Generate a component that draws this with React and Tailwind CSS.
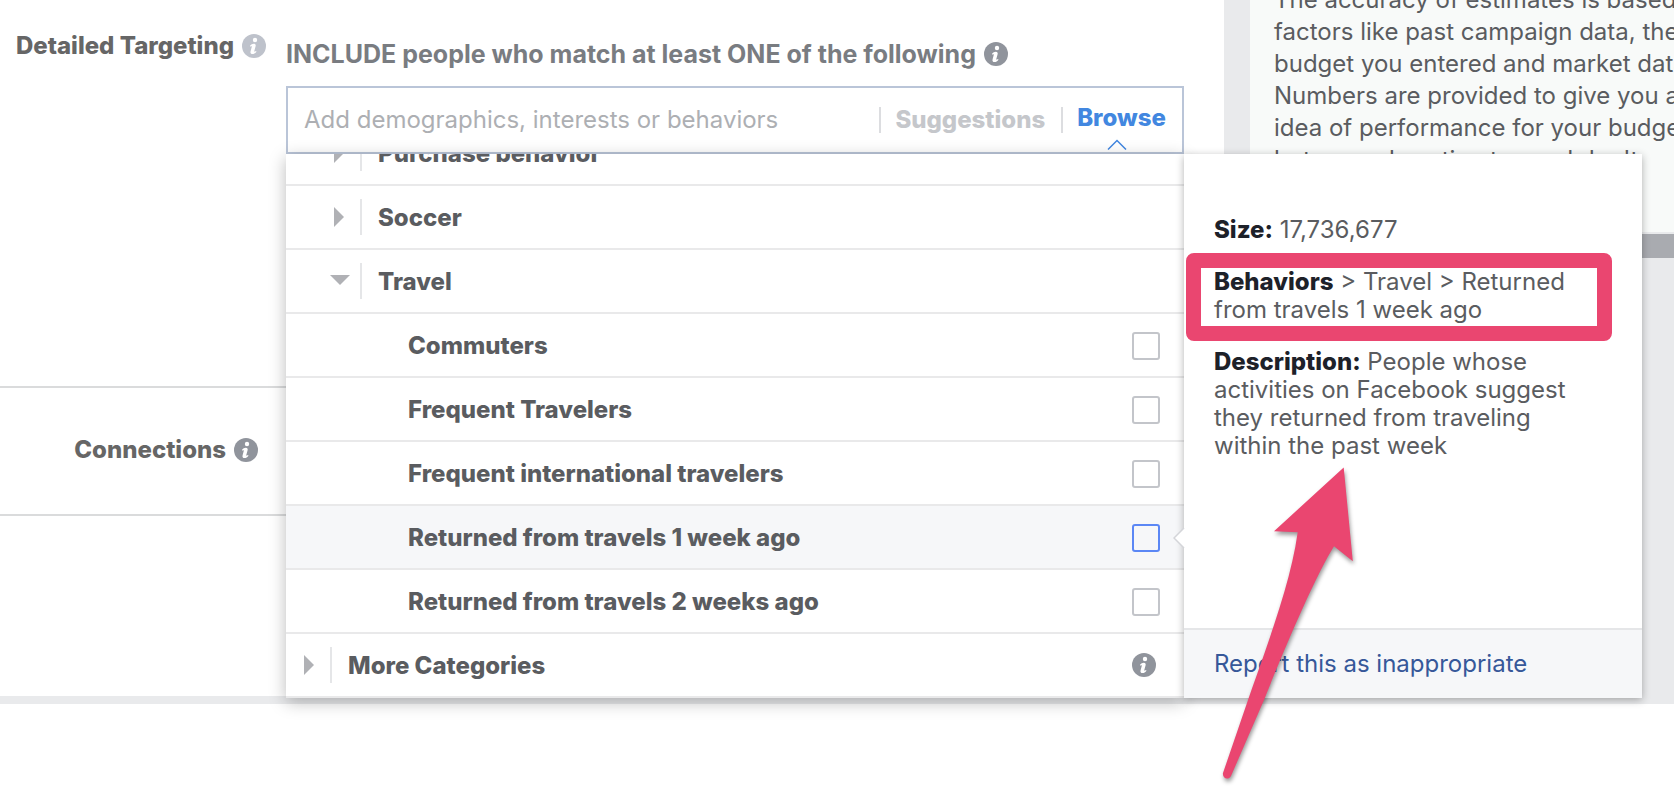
import React from "react";

function InfoIcon({ className }) {
  return (
    <svg viewBox="0 0 24 24" className={"size-6 shrink-0 " + className} aria-hidden="true">
      <circle cx="12" cy="12" r="12" fill="currentColor" />
      <circle cx="13" cy="6" r="2.2" fill="#fff" />
      <path
        d="M8 11.800c1-1.300 2.400-2 3.800-2 1.500 0 2.200 1 1.800 2.500l-1.300 4.700c-.2.800.2.900.7.600l1-.7.500.8c-1.100 1.500-2.500 2.400-4 2.400-1.700 0-2.400-1.100-1.900-2.900l1.200-4.400c.2-.7-.2-.8-.6-.5l-.8.400z"
        fill="#fff"
      />
    </svg>
  );
}

function Triangle({ open }) {
  return (
    <svg viewBox="0 0 20 20" className="size-5 shrink-0 text-[#b0b1b5]" aria-hidden="true">
      <path d={open ? "M0 4h20l-10 10z" : "M4 0v20l10-10z"} fill="currentColor" />
    </svg>
  );
}

function CategoryRow({ label, open, nested, info, className = "" }) {
  return (
    <li className={"flex h-16 items-center border-b-2 border-[#e9e9ea] pr-7 " + (nested ? "pl-11 " : "pl-[14px] ") + className}>
      <button type="button" aria-expanded={!!open} className="flex flex-1 items-center text-left font-extrabold">
        <Triangle open={open} />
        <span className="ml-[10px] flex h-9 items-center border-l-2 border-[#e5e6e8] pt-0.5 pl-4">{label}</span>
      </button>
      {info && <InfoIcon className="text-[#90949c]" />}
    </li>
  );
}

function OptionRow({ id, label, active }) {
  return (
    <li className={"flex h-16 items-center border-b-2 border-[#e9e9ea] pt-0.5 pr-6 pl-[122px] " + (active ? "bg-[#f6f7f9]" : "")}>
      <label htmlFor={id} className="flex-1 font-extrabold">
        {label}
      </label>
      <input
        id={id}
        type="checkbox"
        className={"size-7 appearance-none rounded-[3px] border-2 " + (active ? "border-[#5b87f5]" : "border-[#c3c5ca]")}
      />
    </li>
  );
}

const options = [
  { id: "commuters", label: "Commuters" },
  { id: "frequent", label: "Frequent Travelers" },
  { id: "international", label: "Frequent international travelers" },
  { id: "week1", label: "Returned from travels 1 week ago", active: true },
  { id: "week2", label: "Returned from travels 2 weeks ago" },
];

const estimateLines = [
  "The accuracy of estimates is based on",
  "factors like past campaign data, the",
  "budget you entered and market data.",
  "Numbers are provided to give you an",
  "idea of performance for your budget,",
  "but are only estimates and don't",
];

function Arrow() {
  return (
    <svg
      viewBox="0 0 160 330"
      className="pointer-events-none absolute top-[306px] left-[30px] h-[330px] w-[160px] overflow-visible drop-shadow-[1px_3px_2px_rgba(0,0,0,0.4)]"
      aria-hidden="true"
    >
      <path
        d="M129.700 7.500 60 71.200l23.700 1.100C77 120 58 172 34 240L9 313c-1 5 5 8 8 3L50 240C78 170 104 112 120 86.300L138.800 101.300z"
        fill="#ea4670"
      />
    </svg>
  );
}

function Flyout() {
  return (
    <section className="absolute top-0 left-full flex h-full w-[458px] flex-col bg-white shadow-[0_2px_8px_rgba(0,0,0,0.3)]">
      <svg viewBox="0 0 12 24" className="absolute top-[372px] -left-[11px] h-6 w-3" aria-hidden="true">
        <path d="M12 1 1 12l11 11z" fill="#fff" />
        <path d="M11 2 1 12l10 10" fill="none" stroke="#d4d5d9" strokeWidth="1.5" />
      </svg>
      <div className="flex flex-1 flex-col gap-6 pt-[62px] pr-16 pl-[30px] leading-7">
        <p>
          <b className="font-extrabold text-[#1d2129]">Size:</b> 17,736,677
        </p>
        <div className="relative">
          <p>
            <b className="font-extrabold text-[#1d2129]">Behaviors</b> &gt; Travel &gt; Returned from travels 1 week ago
          </p>
          <div className="pointer-events-none absolute -top-[15px] -left-7 h-[88px] w-[426px] rounded-lg border-[15px] border-[#ea4670]" />
        </div>
        <p>
          <b className="font-extrabold text-[#1d2129]">Description:</b> People whose activities on Facebook suggest they
          returned from traveling within the past week
        </p>
      </div>
      <footer className="flex h-[70px] items-center border-t-2 border-[#e5e6e8] bg-[#f6f7f9] pl-[30px]">
        <a href="#report" className="text-[#365899]">
          Report this as inappropriate
        </a>
      </footer>
      <Arrow />
    </section>
  );
}

function TargetingPicker() {
  return (
    <div className="relative">
      <div className="flex h-[68px] items-center border-2 border-[#bac5d8] bg-white pr-4 pl-4">
        <input
          type="text"
          aria-label="Detailed targeting"
          placeholder="Add demographics, interests or behaviors"
          className="min-w-0 flex-1 outline-none placeholder:text-[#adafb3]"
        />
        <button type="button" className="flex h-[26px] items-center border-l-2 border-[#dcdde0] pl-[14px] font-extrabold text-[#c5c7cb]">
          Suggestions
        </button>
        <button
          type="button"
          className="relative ml-4 flex h-[26px] items-center border-l-2 border-[#dcdde0] pb-1 pl-[14px] font-extrabold text-[#4287e0]"
        >
          Browse
          <svg viewBox="0 0 20 11" className="absolute top-8 left-11 h-[11px] w-5" fill="none" aria-hidden="true">
            <path d="M1 10.500 10 1.500l9 9" stroke="currentColor" strokeWidth="1.5" />
          </svg>
        </button>
      </div>
      <div className="absolute top-full right-0 left-0 shadow-[0_4px_16px_rgba(0,0,0,0.27)]">
        <ul className="overflow-hidden bg-white">
          <CategoryRow nested label="Purchase behavior" className="-mt-8" />
          <CategoryRow nested label="Soccer" />
          <CategoryRow nested open label="Travel" />
          {options.map((o) => (
            <OptionRow key={o.id} {...o} />
          ))}
          <CategoryRow label="More Categories" info />
        </ul>
        <Flyout />
      </div>
    </div>
  );
}

export default function App() {
  return (
    <div className="min-h-screen overflow-hidden bg-white font-['Inter',sans-serif] text-[24px] leading-8 text-[#5a5c60]">
      <div className="flex bg-[#e9eaec]">
        <main className="mb-2 min-w-0 flex-1 bg-white">
          <div className="flex h-[388px] border-b-2 border-[#dadbdc]">
            <div className="flex w-[286px] shrink-0 items-start justify-end gap-2 pt-[30px] pr-5 font-extrabold text-[#666]">
              Detailed Targeting
              <InfoIcon className="mt-1 text-[#bec2cb]" />
            </div>
            <div className="min-w-0 flex-1 pr-10">
              <h2 className="flex items-center gap-2 pt-[38px] pb-4 text-[25px] leading-8 font-bold whitespace-nowrap text-[#797c81]">
                INCLUDE people who match at least ONE of the following
                <InfoIcon className="text-[#90949c]" />
              </h2>
              <TargetingPicker />
            </div>
          </div>
          <div className="flex h-32 border-b-2 border-[#dadbdc]">
            <div className="flex w-[286px] items-center justify-end gap-2 pr-7 pb-0.5 font-extrabold text-[#666]">
              Connections
              <InfoIcon className="text-[#90949c]" />
            </div>
          </div>
          <div className="h-[180px]" />
        </main>
        <aside className="w-[450px] shrink-0 overflow-hidden pl-[26px]">
          <div className="h-[232px] overflow-hidden bg-[#f8faf9] pl-6">
            <p className="-mt-4 whitespace-nowrap">
              {estimateLines.map((line) => (
                <span key={line} className="block">
                  {line}
                </span>
              ))}
            </p>
          </div>
          <div className="mt-0.5 h-6 bg-[#a9abb0]" />
        </aside>
      </div>
    </div>
  );
}
